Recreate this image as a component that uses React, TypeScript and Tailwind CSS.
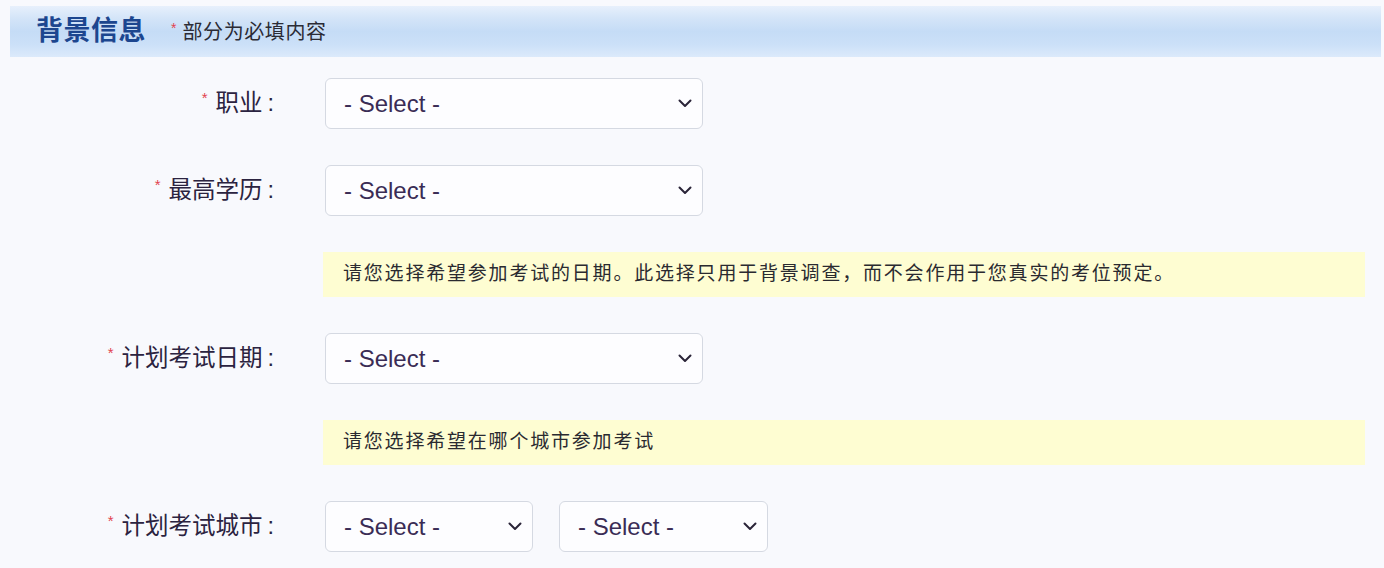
import React from "react";

const cjk = { fontFamily: '"Liberation Sans", "Noto Sans CJK SC", sans-serif' };

const Chevron = () => (
  <svg width="14" height="9" viewBox="0 0 14 9" fill="none">
    <path d="M1.5 1.5 L7 7 L12.5 1.5" stroke="#2a2438" strokeWidth="2" strokeLinecap="round" strokeLinejoin="round" />
  </svg>
);

const SelectBox = ({ w }: { w: string }) => (
  <div
    className={`${w} h-[51px] rounded-[6px] border border-[#d5d9e2] bg-[#fdfdff] flex items-center justify-between pl-[18px] pr-[10px] shrink-0`}
  >
    <span className="text-[24px] text-[#3a2c55] leading-none" style={{ fontFamily: '"Liberation Sans", Arial, sans-serif' }}>
      - Select -
    </span>
    <Chevron />
  </div>
);

const Label = ({ text }: { text: string }) => (
  <div className="w-[274px] shrink-0 flex justify-end items-center text-[23.5px] text-[#2b2340] leading-none">
    <span className="text-[#e2434f] text-[15px] relative top-[-6px] mr-[8px]">*</span>
    <span>{text}</span>
    <span className="ml-[5px]">:</span>
  </div>
);

const Row = ({ label, children }: { label: string; children: React.ReactNode }) => (
  <div className="flex items-center">
    <Label text={label} />
    <div className="ml-[51px] flex gap-[26px]">{children}</div>
  </div>
);

const Note = ({ text }: { text: string }) => (
  <div className="ml-[323px] mr-[19px] h-[45px] bg-[#fefdd2] flex items-center pl-[20px] text-[19px] tracking-[1.8px] text-[#2a2a30]">
    {text}
  </div>
);

export default function App() {
  return (
    <div className="w-[1384px] h-[568px] bg-[#f8f9fd] overflow-hidden pt-[6px]" style={cjk}>
      <div
        className="ml-[10px] w-[1371px] h-[51px] flex items-center pl-[26px]"
        style={{
          background:
            "linear-gradient(to bottom, #e7f0fc 0%, #d3e4f8 25%, #c5dcf6 50%, #cbe0f8 75%, #dceafb 100%)",
        }}
      >
        <span className="text-[27px] font-bold text-[#1c468f] leading-none tracking-[0.5px]">背景信息</span>
        <span className="ml-[25px] text-[#e2434f] text-[14px] relative top-[-3px] mr-[6px]">*</span>
        <span className="text-[20px] text-[#2b2b35] tracking-[0.6px] leading-none">部分为必填内容</span>
      </div>

      <div className="mt-[21px] flex flex-col gap-[36px]">
        <Row label="职业">
          <SelectBox w="w-[378px]" />
        </Row>
        <Row label="最高学历">
          <SelectBox w="w-[378px]" />
        </Row>
        <Note text="请您选择希望参加考试的日期。此选择只用于背景调查，而不会作用于您真实的考位预定。" />
        <Row label="计划考试日期">
          <SelectBox w="w-[378px]" />
        </Row>
        <Note text="请您选择希望在哪个城市参加考试" />
        <Row label="计划考试城市">
          <SelectBox w="w-[208px]" />
          <SelectBox w="w-[209px]" />
        </Row>
      </div>
    </div>
  );
}
